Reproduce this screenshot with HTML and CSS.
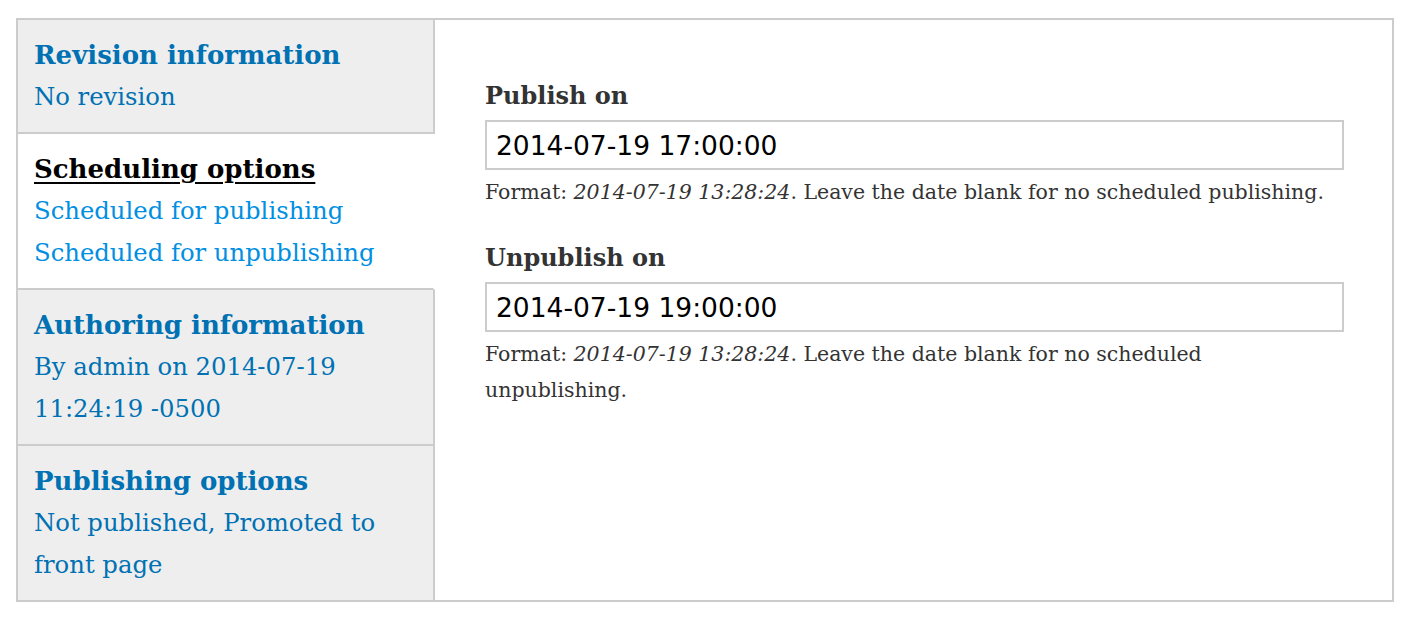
FILE: index.html
```html
<!DOCTYPE html>
<html lang="en">
<head>
<meta charset="utf-8">
<title>Scheduling options</title>
<link rel="stylesheet" href="styles.css">
</head>
<body>
<div class="vtabs">
  <ul class="tab-list">
    <li class="tab">
      <a class="tab-link" href="#">
        <strong class="tab-title">Revision information</strong>
        <span class="tab-summary">No revision</span>
      </a>
    </li>
    <li class="tab tab-active">
      <a class="tab-link" href="#">
        <strong class="tab-title">Scheduling options</strong>
        <span class="tab-summary">Scheduled for publishing</span>
        <span class="tab-summary">Scheduled for unpublishing</span>
      </a>
    </li>
    <li class="tab">
      <a class="tab-link" href="#">
        <strong class="tab-title">Authoring information</strong>
        <span class="tab-summary">By admin on 2014-07-19 11:24:19 -0500</span>
      </a>
    </li>
    <li class="tab tab-last">
      <a class="tab-link" href="#">
        <strong class="tab-title">Publishing options</strong>
        <span class="tab-summary">Not published, Promoted to front page</span>
      </a>
    </li>
  </ul>
  <div class="pane">
    <div class="form-item">
      <label class="form-label" for="publish-on">Publish on</label>
      <input class="form-text" id="publish-on" type="text" value="2014-07-19 17:00:00">
      <div class="description">Format: <em>2014-07-19 13:28:24</em>. Leave the date blank for no scheduled publishing.</div>
    </div>
    <div class="form-item">
      <label class="form-label" for="unpublish-on">Unpublish on</label>
      <input class="form-text" id="unpublish-on" type="text" value="2014-07-19 19:00:00">
      <div class="description">Format: <em>2014-07-19 13:28:24</em>. Leave the date blank for no scheduled unpublishing.</div>
    </div>
  </div>
</div>
</body>
</html>
```

FILE: styles.css
```css
html, body {
  margin: 0;
  padding: 0;
  background: #fff;
}

body {
  font-family: "DejaVu Serif", "Liberation Serif", serif;
  color: #333;
  padding: 18px 0 0 16px;
}

.vtabs {
  display: flex;
  width: 1378px;
  box-sizing: border-box;
  border: 2px solid #ccc;
  background: #fff;
}

.tab-list {
  list-style: none;
  margin: 0;
  padding: 0;
  width: 417px;
  flex: none;
}

.tab {
  background: #eee;
  border-right: 2px solid #ccc;
  border-bottom: 2px solid #ccc;
  padding: 14px 12px 14px 16px;
  font-size: 26px;
  line-height: 42px;
}

.tab-last {
  border-bottom: 0;
}

.tab-active {
  background: #fff;
  border-right-color: #fff;
}

.tab-link {
  display: block;
  text-decoration: none;
  color: #0071b3;
}

.tab-title {
  display: block;
  font-weight: bold;
  font-size: 26px;
}

.tab-summary {
  display: block;
  font-size: 24.3px;
}

.tab-active .tab-title {
  color: #000;
  text-decoration: underline;
  text-decoration-thickness: 2px;
  text-underline-offset: 4px;
}

.tab-active .tab-summary {
  color: #018fe2;
}

.pane {
  flex: 1;
  padding: 58px 48px 0 50px;
}

.form-item {
  margin-bottom: 30px;
}

.form-label {
  display: block;
  font-weight: bold;
  font-size: 24px;
  line-height: 36px;
  margin-bottom: 6px;
}

.form-text {
  display: block;
  box-sizing: border-box;
  width: 859px;
  height: 50px;
  margin: 0;
  padding: 0 9px;
  border: 2px solid #ccc;
  font-family: "DejaVu Sans", "Liberation Sans", sans-serif;
  font-size: 26.5px;
  color: #000;
  background: #fff;
}

.description {
  font-size: 20.5px;
  line-height: 36px;
  margin-top: 4px;
  color: #333;
}

.description em {
  font-style: italic;
}
```
